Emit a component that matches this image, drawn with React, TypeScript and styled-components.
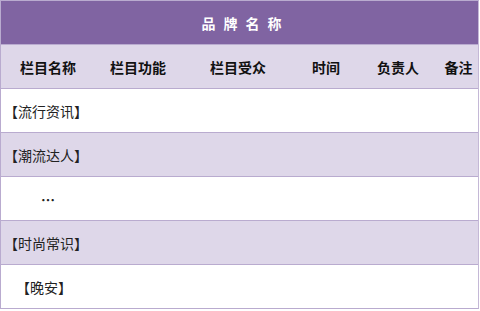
import React from "react";
import styled, { createGlobalStyle } from "styled-components";

const Global = createGlobalStyle`
  html, body { margin: 0; padding: 0; background: #ffffff; }
  body { font-family: "Noto Sans CJK SC", "Noto Sans", sans-serif; }
`;

const COLS = "94px 86px 114px 62px 82px 1fr";

const Table = styled.div`
  width: 479px;
  border: 1px solid #b9abcf;
  border-right-color: #c4b8d6;
  box-sizing: border-box;
  display: flex;
  flex-direction: column;
`;

const Title = styled.div`
  height: 43px;
  background: #8064a2;
  color: #ffffff;
  font-weight: 700;
  font-size: 14px;
  letter-spacing: 8px;
  padding-left: 12px;
  display: flex;
  align-items: center;
  justify-content: center;
`;

const Row = styled.div<{ $shade?: boolean }>`
  height: 43px;
  border-top: 1px solid #b9abcf;
  background: ${(p) => (p.$shade ? "#ded7e9" : "#ffffff")};
  display: grid;
  grid-template-columns: ${COLS};
  align-items: center;
`;

const HeadCell = styled.div`
  text-align: center;
  font-size: 14px;
  font-weight: 700;
  color: #111111;
  white-space: nowrap;
`;

const Cell = styled.div<{ $indent?: number; $center?: boolean; $bold?: boolean }>`
  font-size: 14px;
  color: #222222;
  white-space: nowrap;
  padding-left: ${(p) => p.$indent ?? 3}px;
  text-align: ${(p) => (p.$center ? "center" : "left")};
  font-weight: ${(p) => (p.$bold ? 700 : 400)};
`;

const heads = ["栏目名称", "栏目功能", "栏目受众", "时间", "负责人", "备注"];

const rows: { label: string; shade: boolean; indent?: number; center?: boolean; bold?: boolean }[] = [
  { label: "【流行资讯】", shade: false, indent: 3 },
  { label: "【潮流达人】", shade: true, indent: 3 },
  { label: "…", shade: false, center: true, bold: true, indent: 0 },
  { label: "【时尚常识】", shade: true, indent: 3 },
  { label: "【晚安】", shade: false, indent: 15 },
];

export default function App() {
  return (
    <>
      <Global />
      <Table>
        <Title>品牌名称</Title>
        <Row $shade>
          {heads.map((h) => (
            <HeadCell key={h}>{h}</HeadCell>
          ))}
        </Row>
        {rows.map((r) => (
          <Row key={r.label} $shade={r.shade}>
            <Cell $indent={r.indent} $center={r.center} $bold={r.bold}>
              {r.label}
            </Cell>
            <Cell />
            <Cell />
            <Cell />
            <Cell />
            <Cell />
          </Row>
        ))}
      </Table>
    </>
  );
}
